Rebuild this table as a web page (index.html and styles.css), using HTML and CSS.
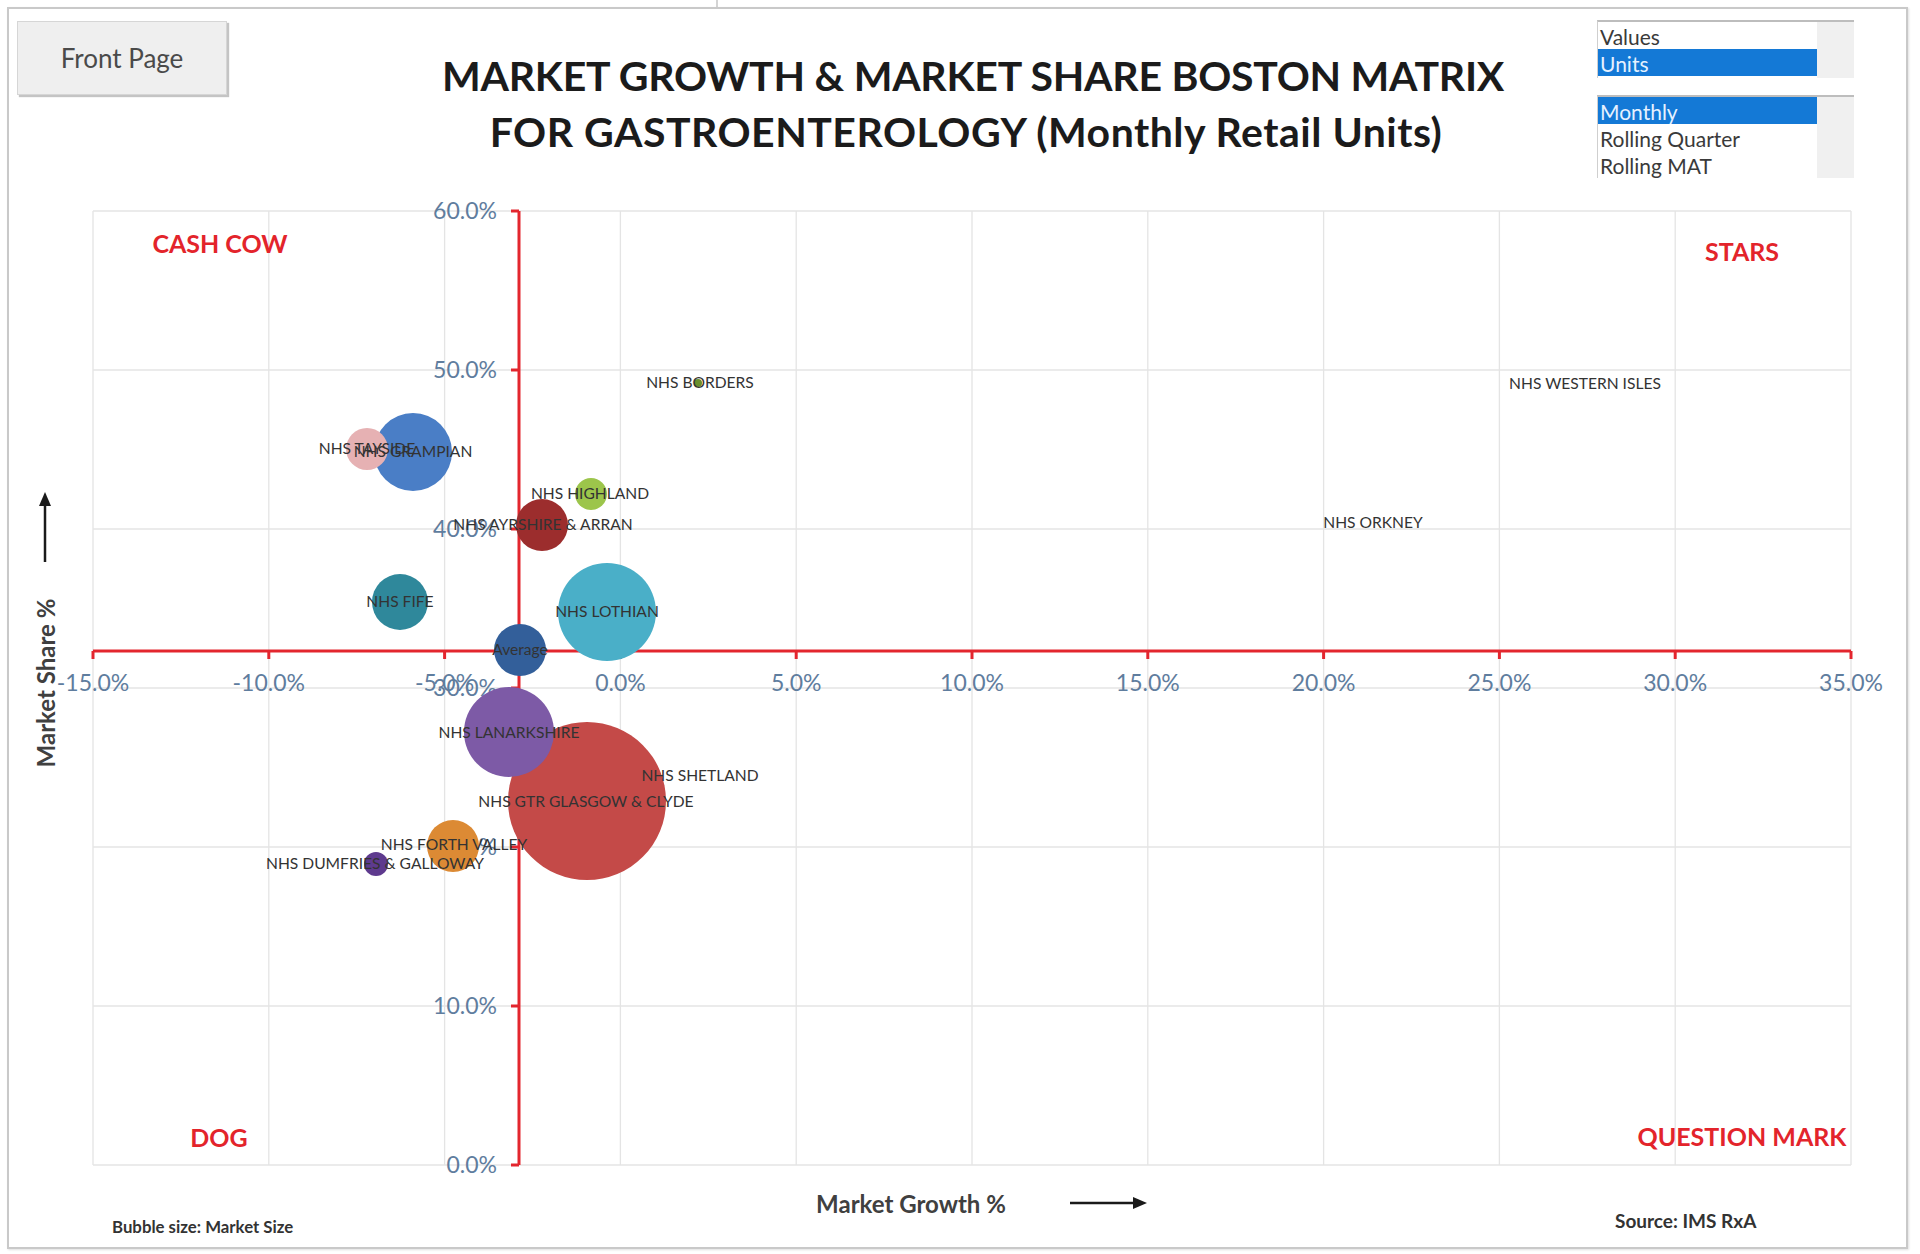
FILE: index.html
```html
<!DOCTYPE html>
<html lang="en">
<head>
<meta charset="utf-8">
<title>Boston Matrix - Gastroenterology</title>
<link rel="stylesheet" href="styles.css">
</head>
<body>
<div class="topmark"></div>
<div class="frame">
  <header class="header">
    <button class="front-btn" type="button">Front Page</button>
    <h1 class="title"><span class="t1">MARKET GROWTH &amp; MARKET SHARE BOSTON MATRIX</span><br><span class="t2">FOR GASTROENTEROLOGY (Monthly Retail Units)</span></h1>
    <div class="lists">
      <div class="listbox lb-small">
        <div class="items">
          <div class="item">Values</div>
          <div class="item sel">Units</div>
        </div>
        <div class="scroll"></div>
      </div>
      <div class="listbox lb-large">
        <div class="items">
          <div class="item sel">Monthly</div>
          <div class="item">Rolling Quarter</div>
          <div class="item">Rolling MAT</div>
        </div>
        <div class="scroll"></div>
      </div>
    </div>
  </header>
  <svg class="chart" width="1897" height="1062" viewBox="9 185 1897 1062" xmlns="http://www.w3.org/2000/svg">
    <g class="grid">
      <line x1="93" y1="211" x2="93" y2="1165"/>
      <line x1="268.8" y1="211" x2="268.8" y2="1165"/>
      <line x1="444.6" y1="211" x2="444.6" y2="1165"/>
      <line x1="620.4" y1="211" x2="620.4" y2="1165"/>
      <line x1="796.2" y1="211" x2="796.2" y2="1165"/>
      <line x1="972" y1="211" x2="972" y2="1165"/>
      <line x1="1147.8" y1="211" x2="1147.8" y2="1165"/>
      <line x1="1323.6" y1="211" x2="1323.6" y2="1165"/>
      <line x1="1499.4" y1="211" x2="1499.4" y2="1165"/>
      <line x1="1675.2" y1="211" x2="1675.2" y2="1165"/>
      <line x1="1851" y1="211" x2="1851" y2="1165"/>
      <line x1="93" y1="211" x2="1851" y2="211"/>
      <line x1="93" y1="370" x2="1851" y2="370"/>
      <line x1="93" y1="529" x2="1851" y2="529"/>
      <line x1="93" y1="688" x2="1851" y2="688"/>
      <line x1="93" y1="847" x2="1851" y2="847"/>
      <line x1="93" y1="1006" x2="1851" y2="1006"/>
      <line x1="93" y1="1165" x2="1851" y2="1165"/>
    </g>
    <g class="axis">
      <line x1="519" y1="211" x2="519" y2="1165"/>
      <line x1="93" y1="651" x2="1851" y2="651"/>
      <line x1="511" y1="211" x2="519" y2="211"/>
      <line x1="511" y1="370" x2="519" y2="370"/>
      <line x1="511" y1="529" x2="519" y2="529"/>
      <line x1="511" y1="688" x2="519" y2="688"/>
      <line x1="511" y1="847" x2="519" y2="847"/>
      <line x1="511" y1="1006" x2="519" y2="1006"/>
      <line x1="511" y1="1165" x2="519" y2="1165"/>
      <line x1="93" y1="651" x2="93" y2="659"/>
      <line x1="268.8" y1="651" x2="268.8" y2="659"/>
      <line x1="444.6" y1="651" x2="444.6" y2="659"/>
      <line x1="620.4" y1="651" x2="620.4" y2="659"/>
      <line x1="796.2" y1="651" x2="796.2" y2="659"/>
      <line x1="972" y1="651" x2="972" y2="659"/>
      <line x1="1147.8" y1="651" x2="1147.8" y2="659"/>
      <line x1="1323.6" y1="651" x2="1323.6" y2="659"/>
      <line x1="1499.4" y1="651" x2="1499.4" y2="659"/>
      <line x1="1675.2" y1="651" x2="1675.2" y2="659"/>
      <line x1="1851" y1="651" x2="1851" y2="659"/>
    </g>
    <g class="ylab">
      <text x="497" y="219">60.0%</text>
      <text x="497" y="378">50.0%</text>
      <text x="497" y="537">40.0%</text>
      <text x="497" y="696">30.0%</text>
      <text x="497" y="855">20.0%</text>
      <text x="497" y="1014">10.0%</text>
      <text x="497" y="1173">0.0%</text>
    </g>
    <g class="xlab">
      <text x="93" y="691">-15.0%</text>
      <text x="268.8" y="691">-10.0%</text>
      <text x="444.6" y="691">-5.0%</text>
      <text x="620.4" y="691">0.0%</text>
      <text x="796.2" y="691">5.0%</text>
      <text x="972" y="691">10.0%</text>
      <text x="1147.8" y="691">15.0%</text>
      <text x="1323.6" y="691">20.0%</text>
      <text x="1499.4" y="691">25.0%</text>
      <text x="1675.2" y="691">30.0%</text>
      <text x="1851" y="691">35.0%</text>
    </g>
    <g class="bubbles">
      <circle cx="587" cy="801" r="79" fill="#c44a48"/>
      <circle cx="607" cy="612" r="49" fill="#4aafc8"/>
      <circle cx="509" cy="732" r="45" fill="#7d5aa6"/>
      <circle cx="413" cy="452" r="39" fill="#4a7ec6"/>
      <circle cx="400" cy="602" r="28" fill="#2f889b"/>
      <circle cx="453" cy="846" r="26" fill="#dc8a34"/>
      <circle cx="542" cy="525" r="26" fill="#9c2d2d"/>
      <circle cx="520" cy="650" r="26" fill="#335f9a"/>
      <circle cx="367" cy="449" r="21" fill="#e6b1b3"/>
      <circle cx="591" cy="494" r="16" fill="#9cc54b"/>
      <circle cx="376" cy="864" r="12" fill="#5e3a8e"/>
      <circle cx="698" cy="383" r="4" fill="#6b8f2c"/>
    </g>
    <g class="blab">
      <text x="367" y="454">NHS TAYSIDE</text>
      <text x="413" y="457">NHS GRAMPIAN</text>
      <text x="700" y="388">NHS BORDERS</text>
      <text x="1585" y="389">NHS WESTERN ISLES</text>
      <text x="590" y="499">NHS HIGHLAND</text>
      <text x="543" y="530">NHS AYRSHIRE &amp; ARRAN</text>
      <text x="1373" y="528">NHS ORKNEY</text>
      <text x="400" y="607">NHS FIFE</text>
      <text x="607" y="617">NHS LOTHIAN</text>
      <text x="520" y="655">Average</text>
      <text x="509" y="738">NHS LANARKSHIRE</text>
      <text x="700" y="781">NHS SHETLAND</text>
      <text x="586" y="807">NHS GTR GLASGOW &amp; CLYDE</text>
      <text x="454" y="850">NHS FORTH VALLEY</text>
      <text x="375" y="869">NHS DUMFRIES &amp; GALLOWAY</text>
    </g>
    <g class="quad">
      <text x="220" y="253">CASH COW</text>
      <text x="1742" y="261">STARS</text>
      <text x="219" y="1147">DOG</text>
      <text x="1742" y="1146">QUESTION MARK</text>
    </g>
    <text class="atitle" x="911" y="1213">Market Growth %</text>
    <text class="atitle" transform="translate(55 683) rotate(-90)" x="0" y="0">Market Share %</text>
    <g class="arrow">
      <line x1="1070" y1="1203" x2="1134" y2="1203"/>
      <polygon points="1147,1203 1133,1197 1133,1209"/>
      <line x1="45" y1="562" x2="45" y2="505"/>
      <polygon points="45,492 39,506 51,506"/>
    </g>
    <text class="foot foot-l" x="112" y="1233">Bubble size: Market Size</text>
    <text class="foot foot-r" x="1615" y="1228">Source: IMS RxA</text>
  </svg>
</div>
</body>
</html>
```
FILE: styles.css
```css
html, body {
  margin: 0;
  padding: 0;
  background: #ffffff;
}
body {
  width: 1920px;
  height: 1254px;
  overflow: hidden;
  font-family: Lato, "Open Sans", sans-serif;
}
.topmark {
  width: 2px;
  height: 7px;
  margin-left: 716px;
  background: #d4d4d4;
}
.frame {
  box-sizing: border-box;
  width: 1901px;
  height: 1242px;
  margin-left: 7px;
  border: 2px solid #c9c9c9;
  box-shadow: 1px 1px 2px rgba(0, 0, 0, 0.12);
  background: #ffffff;
  display: flex;
  flex-direction: column;
}
.header {
  height: 176px;
  display: flex;
  align-items: flex-start;
  flex: none;
}
.front-btn {
  box-sizing: border-box;
  width: 210px;
  height: 74px;
  margin: 12px 0 0 8px;
  background: #efefef;
  border: 1px solid #d6d6d6;
  box-shadow: 2px 2px 1px #c4c4c4;
  font-family: Lato, sans-serif;
  font-size: 26px;
  color: #4a4a4a;
  padding: 0;
}
.title {
  flex: 1;
  margin: 39px 0 0 0;
  padding-left: 122px;
  text-align: center;
  font-family: Lato, sans-serif;
  font-weight: 700;
  font-size: 41px;
  line-height: 56px;
  color: #1b1b1b;
}
.t1 { letter-spacing: -0.25px; }
.t2 {
  letter-spacing: 0.5px;
  margin-right: 14px;
}
.lists {
  display: flex;
  flex-direction: column;
  gap: 17px;
  margin: 11px 52px 0 0;
  width: 257px;
}
.listbox {
  display: flex;
  border-top: 2px solid #bdbdbd;
  border-left: 1px solid #cfcfcf;
  background: #ffffff;
}
.lb-small { height: 56px; }
.lb-large { height: 81px; }
.items {
  flex: 1;
  overflow: hidden;
}
.scroll {
  width: 37px;
  background: #f0f0f0;
}
.item {
  height: 27px;
  line-height: 30px;
  padding-left: 2px;
  font-family: Lato, sans-serif;
  font-size: 21px;
  color: #3a3a3a;
  white-space: nowrap;
}
.item.sel {
  background: #1479d6;
  color: #e6f1ff;
}
.chart {
  display: block;
  flex: none;
}
.grid line {
  stroke: #e4e4e4;
  stroke-width: 1.3;
}
.axis line {
  stroke: #e3262e;
  stroke-width: 3;
}
.ylab text {
  font-family: Lato, sans-serif;
  font-size: 23px;
  fill: #5f7d9e;
  text-anchor: end;
}
.xlab text {
  font-family: Lato, sans-serif;
  font-size: 23px;
  fill: #5f7d9e;
  text-anchor: middle;
}
.blab text {
  font-family: Lato, sans-serif;
  font-size: 15.6px;
  fill: #333333;
  text-anchor: middle;
}
.quad text {
  font-family: Lato, sans-serif;
  font-weight: 700;
  font-size: 25px;
  fill: #e3242b;
  text-anchor: middle;
}
.atitle {
  font-family: Lato, sans-serif;
  font-weight: 700;
  font-size: 24px;
  fill: #404040;
  text-anchor: middle;
}
.arrow line {
  stroke: #1a1a1a;
  stroke-width: 2.5;
}
.arrow polygon {
  fill: #1a1a1a;
}
.foot {
  font-family: Lato, sans-serif;
  font-weight: 700;
  fill: #333333;
}
.foot-l { font-size: 16.8px; }
.foot-r { font-size: 19px; }
```
